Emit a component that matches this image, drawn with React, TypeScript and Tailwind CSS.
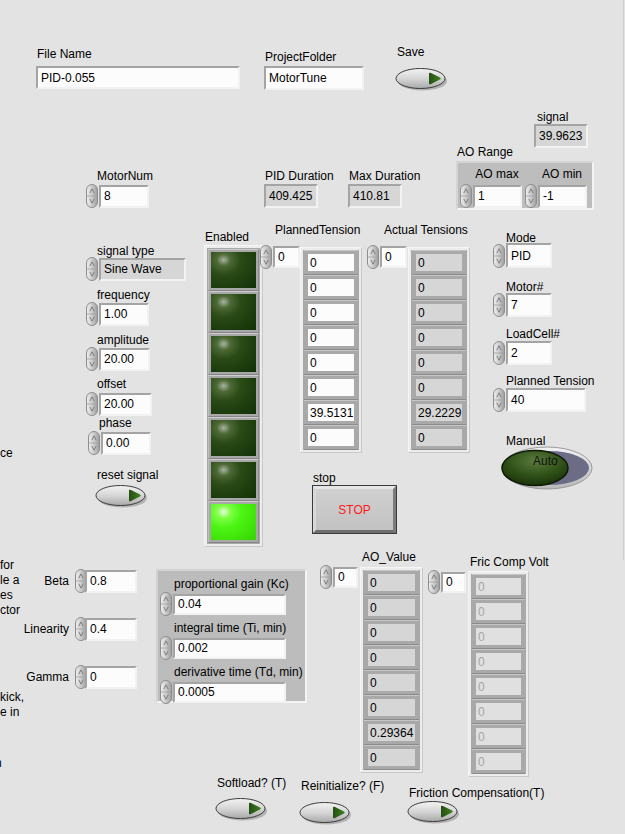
import React from "react";

function Spinner({ className = "" }: { className?: string }) {
  return (
    <svg width="12" height="24" viewBox="0 0 12 24" className={`shrink-0 ${className}`}>
      <defs>
        <linearGradient id="spg" x1="0" x2="1" y1="0" y2="0">
          <stop offset="0" stopColor="#f0f0f0" />
          <stop offset="0.45" stopColor="#cfcfcf" />
          <stop offset="1" stopColor="#9c9c9c" />
        </linearGradient>
      </defs>
      <rect x="0.5" y="0.5" width="11" height="23" rx="5.5" fill="url(#spg)" stroke="#8e8e8e" />
      <line x1="1" y1="12" x2="11" y2="12" stroke="#a0a0a0" strokeWidth="0.8" />
      <path d="M3.8 9.2 L6 4.8 L8.2 9.2" fill="none" stroke="#6a6a6a" strokeWidth="0.8" />
      <path d="M3.8 14.8 L6 19.2 L8.2 14.8" fill="none" stroke="#6a6a6a" strokeWidth="0.8" />
    </svg>
  );
}

function Box({
  className = "",
  tone = "white",
  children,
}: {
  className?: string;
  tone?: "white" | "gray" | "dis";
  children?: React.ReactNode;
}) {
  const bg =
    tone === "white"
      ? "bg-[#fcfcfc] text-black"
      : tone === "gray"
      ? "bg-[#d6d6d6] text-black"
      : "bg-[#e2e2e2] text-[#a8a8a8]";
  return (
    <div
      className={`flex items-center pl-[3px] border-2 border-t-[#a4a4a4] border-l-[#a4a4a4] border-r-[#f2f2f2] border-b-[#f2f2f2] leading-none whitespace-nowrap ${bg} ${className}`}
    >
      {children}
    </div>
  );
}

function OkButton({ className = "" }: { className?: string }) {
  return (
    <svg width="53" height="25" viewBox="0 0 53 25" className={className}>
      <defs>
        <linearGradient id="okg" x1="0" x2="0" y1="0" y2="1">
          <stop offset="0" stopColor="#f4f4f4" />
          <stop offset="0.55" stopColor="#d2d2d2" />
          <stop offset="1" stopColor="#a8a8a8" />
        </linearGradient>
        <linearGradient id="okt" x1="0" x2="1" y1="0" y2="0">
          <stop offset="0" stopColor="#244f12" />
          <stop offset="1" stopColor="#3f7f22" />
        </linearGradient>
      </defs>
      <ellipse cx="27.5" cy="14" rx="24.5" ry="9.5" fill="#8a8a8a" opacity="0.55" />
      <ellipse cx="25.5" cy="11.5" rx="24.5" ry="10" fill="url(#okg)" stroke="#3c3c3c" strokeWidth="1" />
      <path d="M34 6 Q35 5.5 36 6 L45 10.5 Q46.5 11.5 45 12.5 L36 17 Q35 17.5 34 17 Z" fill="url(#okt)" />
    </svg>
  );
}

function Led({ on = false }: { on?: boolean }) {
  return (
    <div className="p-[2px] bg-[#a8a8a8] border-t border-t-[#cdcdcd] border-l border-l-[#bdbdbd] border-b border-b-[#858585] border-r border-r-[#8e8e8e]">
      <div
        className={`w-[45px] h-[36px] ${
          on
            ? "bg-[radial-gradient(ellipse_at_28%_22%,#e8ffd8_0%,#7dff45_16%,#4cf514_40%,#36d400_100%)]"
            : "bg-[radial-gradient(ellipse_at_28%_22%,#a8b4a0_0%,#4d6a36_15%,#2a4a16_38%,#123006_100%)]"
        }`}
      />
    </div>
  );
}

function ArrayCol({
  values,
  tone,
  className = "",
}: {
  values: string[];
  tone: "white" | "gray" | "dis";
  className?: string;
}) {
  const inner =
    tone === "white"
      ? "bg-[#fcfcfc] text-black"
      : tone === "gray"
      ? "bg-[#d6d6d6] text-black"
      : "bg-[#e0e0e0] text-[#a6a6a6]";
  return (
    <div className={`flex flex-col p-[2px] bg-[#ececec] border border-t-[#f6f6f6] border-l-[#f6f6f6] border-b-[#c8c8c8] border-r-[#c8c8c8] ${className}`}>
      <div className="flex flex-col bg-[#a9a9a9] px-[1px]">
        {values.map((v, i) => (
          <div
            key={i}
            className="px-[4px] py-[3px] border-t border-t-[#c6c6c6] border-b border-b-[#8a8a8a]"
          >
            <div className={`h-[17px] flex items-center pl-[2px] leading-none ${inner}`}>{v}</div>
          </div>
        ))}
      </div>
    </div>
  );
}

function Lbl({ className = "", children }: { className?: string; children: React.ReactNode }) {
  return <div className={`absolute leading-[14px] whitespace-nowrap ${className}`}>{children}</div>;
}

export default function App() {
  return (
    <div className="relative w-[625px] h-[834px] overflow-hidden bg-[#e3e3e3] text-[12px] text-black font-['Liberation_Sans',Arial,sans-serif]">
      {/* right edge line */}
      <div className="absolute left-[623px] top-0 w-[1px] h-[560px] bg-[#cfcfcf]" />

      {/* File name */}
      <Lbl className="left-[37px] top-[47px]">File Name</Lbl>
      <Box className="absolute left-[36px] top-[66px] w-[204px] h-[23px]">PID-0.055</Box>

      <Lbl className="left-[265px] top-[50px]">ProjectFolder</Lbl>
      <Box className="absolute left-[264px] top-[66px] w-[100px] h-[24px]">MotorTune</Box>

      <Lbl className="left-[397px] top-[45px]">Save</Lbl>
      <OkButton className="absolute left-[395px] top-[67px]" />

      <Lbl className="left-[537px] top-[110px]">signal</Lbl>
      <Box tone="gray" className="absolute left-[534px] top-[124px] w-[54px] h-[24px]">39.9623</Box>

      {/* AO Range cluster */}
      <Lbl className="left-[457px] top-[145px]">AO Range</Lbl>
      <div className="absolute left-[456px] top-[161px] w-[138px] h-[49px] bg-[#bdbdbd] border-2 border-t-[#d4d4d4] border-l-[#d4d4d4] border-r-[#f4f4f4] border-b-[#f4f4f4] flex gap-[3px] pl-[2px] pt-[2px]">
        <div className="flex flex-col items-center">
          <div className="leading-[14px] ml-[12px] mt-[2px] mb-[3px]">AO max</div>
          <div className="flex items-center gap-[1px]">
            <Spinner />
            <Box className="w-[49px] h-[23px]">1</Box>
          </div>
        </div>
        <div className="flex flex-col items-center">
          <div className="leading-[14px] ml-[12px] mt-[2px] mb-[3px]">AO min</div>
          <div className="flex items-center gap-[1px]">
            <Spinner />
            <Box className="w-[49px] h-[23px]">-1</Box>
          </div>
        </div>
      </div>

      {/* MotorNum */}
      <Lbl className="left-[97px] top-[169px]">MotorNum</Lbl>
      <div className="absolute left-[86px] top-[184px] flex items-center gap-[1px]">
        <Spinner />
        <Box className="w-[50px] h-[23px]">8</Box>
      </div>

      <Lbl className="left-[265px] top-[169px]">PID Duration</Lbl>
      <Box tone="gray" className="absolute left-[264px] top-[184px] w-[54px] h-[24px]">409.425</Box>

      <Lbl className="left-[349px] top-[169px]">Max Duration</Lbl>
      <Box tone="gray" className="absolute left-[348px] top-[184px] w-[54px] h-[24px]">410.81</Box>

      {/* Enabled LEDs */}
      <Lbl className="left-[205px] top-[230px]">Enabled</Lbl>
      <div className="absolute left-[204px] top-[245px] p-[2px] bg-[#ececec] border border-t-[#f6f6f6] border-l-[#f6f6f6] border-b-[#c8c8c8] border-r-[#c8c8c8]">
        <div className="flex flex-col bg-[#a9a9a9] p-[1px]">
          <Led />
          <Led />
          <Led />
          <Led />
          <Led />
          <Led />
          <Led on />
        </div>
      </div>

      {/* Planned Tension array */}
      <Lbl className="left-[275px] top-[223px]">PlannedTension</Lbl>
      <div className="absolute left-[260px] top-[245px] flex items-center gap-[1px]">
        <Spinner />
        <Box className="w-[27px] h-[22px]">0</Box>
      </div>
      <ArrayCol
        className="absolute left-[300px] top-[247px] w-[62px]"
        tone="white"
        values={["0", "0", "0", "0", "0", "0", "39.5131", "0"]}
      />

      <Lbl className="left-[384px] top-[223px]">Actual Tensions</Lbl>
      <div className="absolute left-[367px] top-[245px] flex items-center gap-[1px]">
        <Spinner />
        <Box className="w-[27px] h-[22px]">0</Box>
      </div>
      <ArrayCol
        className="absolute left-[408px] top-[247px] w-[62px]"
        tone="gray"
        values={["0", "0", "0", "0", "0", "0", "29.2229", "0"]}
      />

      {/* stop */}
      <Lbl className="left-[313px] top-[471px]">stop</Lbl>
      <div className="absolute left-[312px] top-[485px] w-[85px] h-[49px] border border-[#3a3a3a] bg-[#7a7a7a] p-0">
        <div className="w-full h-full border-[3px] border-t-[#e6e6e6] border-l-[#d8d8d8] border-r-[#7c7c7c] border-b-[#6e6e6e] bg-[linear-gradient(#d0d0d0,#c2c2c2)] flex items-center justify-center text-[#ff1a1a] text-[12px]">
          STOP
        </div>
      </div>

      {/* Right column */}
      <Lbl className="left-[506px] top-[231px]">Mode</Lbl>
      <div className="absolute left-[493px] top-[243px] flex items-center gap-[1px]">
        <Spinner />
        <Box className="w-[46px] h-[25px]">PID</Box>
      </div>
      <Lbl className="left-[506px] top-[280px]">Motor#</Lbl>
      <div className="absolute left-[493px] top-[293px] flex items-center gap-[1px]">
        <Spinner />
        <Box className="w-[46px] h-[24px]">7</Box>
      </div>
      <Lbl className="left-[506px] top-[327px]">LoadCell#</Lbl>
      <div className="absolute left-[493px] top-[341px] flex items-center gap-[1px]">
        <Spinner />
        <Box className="w-[46px] h-[24px]">2</Box>
      </div>
      <Lbl className="left-[506px] top-[374px]">Planned Tension</Lbl>
      <div className="absolute left-[493px] top-[388px] flex items-center gap-[1px]">
        <Spinner />
        <Box className="w-[80px] h-[24px]">40</Box>
      </div>

      <Lbl className="left-[506px] top-[434px]">Manual</Lbl>
      <div className="absolute left-[499px] top-[445px] w-[94px] h-[46px]">
        <svg width="94" height="46" viewBox="0 0 94 46" className="absolute left-0 top-0">
          <defs>
            <linearGradient id="ring" x1="0" x2="0" y1="0" y2="1">
              <stop offset="0" stopColor="#f2f2f2" />
              <stop offset="1" stopColor="#b8b8b8" />
            </linearGradient>
            <radialGradient id="gsw" cx="0.5" cy="0.3" r="0.7">
              <stop offset="0" stopColor="#5a7a3c" />
              <stop offset="0.6" stopColor="#2f5018" />
              <stop offset="1" stopColor="#1a3309" />
            </radialGradient>
          </defs>
          <ellipse cx="48" cy="23" rx="45" ry="21" fill="url(#ring)" stroke="#9a9a9a" strokeWidth="1" />
          <ellipse cx="50" cy="23" rx="40" ry="17" fill="#6c6c86" />
          <ellipse cx="36" cy="23" rx="33" ry="17.5" fill="url(#gsw)" stroke="#0e1a06" strokeWidth="1.5" />
        </svg>
        <div className="absolute left-[34px] top-[9px] leading-[14px] text-[#111]">Auto</div>
      </div>

      {/* Signal params */}
      <Lbl className="left-[97px] top-[244px]">signal type</Lbl>
      <div className="absolute left-[86px] top-[257px] flex items-center gap-[1px]">
        <Spinner />
        <Box tone="gray" className="w-[87px] h-[23px]">Sine Wave</Box>
      </div>
      <Lbl className="left-[97px] top-[288px]">frequency</Lbl>
      <div className="absolute left-[86px] top-[302px] flex items-center gap-[1px]">
        <Spinner />
        <Box className="w-[50px] h-[23px]">1.00</Box>
      </div>
      <Lbl className="left-[97px] top-[333px]">amplitude</Lbl>
      <div className="absolute left-[86px] top-[347px] flex items-center gap-[1px]">
        <Spinner />
        <Box className="w-[51px] h-[23px]">20.00</Box>
      </div>
      <Lbl className="left-[97px] top-[377px]">offset</Lbl>
      <div className="absolute left-[86px] top-[392px] flex items-center gap-[1px]">
        <Spinner />
        <Box className="w-[53px] h-[23px]">20.00</Box>
      </div>
      <Lbl className="left-[99px] top-[416px]">phase</Lbl>
      <div className="absolute left-[88px] top-[431px] flex items-center gap-[1px]">
        <Spinner />
        <Box className="w-[50px] h-[23px]">0.00</Box>
      </div>
      <Lbl className="left-[97px] top-[468px]">reset signal</Lbl>
      <OkButton className="absolute left-[95px] top-[484px]" />

      {/* cut-off left text */}
      <Lbl className="left-0 top-[446px]">ce</Lbl>
      <div className="absolute left-0 top-[558px] leading-[15px] whitespace-nowrap">
        <div>for</div>
        <div>le a</div>
        <div>es</div>
        <div>ctor</div>
      </div>
      <div className="absolute left-0 top-[690px] leading-[15px] whitespace-nowrap">
        <div>kick,</div>
        <div>e in</div>
      </div>
      <Lbl className="left-[-5px] top-[756px]">n</Lbl>

      {/* Beta / Linearity / Gamma */}
      <div className="absolute left-0 top-[569px] flex flex-col gap-[24px]">
        <div className="flex items-center">
          <div className="w-[70px] text-right pr-[1px] leading-[14px]">Beta</div>
          <Spinner className="ml-[5px]" />
          <Box className="w-[52px] h-[23px] ml-[-2px]">0.8</Box>
        </div>
        <div className="flex items-center">
          <div className="w-[70px] text-right pr-[1px] leading-[14px]">Linearity</div>
          <Spinner className="ml-[5px]" />
          <Box className="w-[52px] h-[23px] ml-[-2px]">0.4</Box>
        </div>
        <div className="flex items-center">
          <div className="w-[70px] text-right pr-[1px] leading-[14px]">Gamma</div>
          <Spinner className="ml-[5px]" />
          <Box className="w-[52px] h-[23px] ml-[-2px]">0</Box>
        </div>
      </div>

      {/* PID gains cluster */}
      <div className="absolute left-[156px] top-[569px] w-[151px] h-[134px] bg-[#bcbcbc] border-2 border-t-[#d2d2d2] border-l-[#d2d2d2] border-r-[#f4f4f4] border-b-[#f4f4f4] pl-[2px] pt-[6px] flex flex-col">
        <div className="leading-[14px] ml-[14px]">proportional gain (Kc)</div>
        <div className="flex items-center gap-[1px] mt-[1px]">
          <Spinner />
          <Box className="w-[113px] h-[21px]">0.04</Box>
        </div>
        <div className="leading-[14px] ml-[14px] mt-[5px]">integral time (Ti, min)</div>
        <div className="flex items-center gap-[1px] mt-[1px]">
          <Spinner />
          <Box className="w-[113px] h-[21px]">0.002</Box>
        </div>
        <div className="leading-[14px] ml-[14px] mt-[5px]">derivative time (Td, min)</div>
        <div className="flex items-center gap-[1px] mt-[1px]">
          <Spinner />
          <Box className="w-[113px] h-[21px]">0.0005</Box>
        </div>
      </div>

      {/* AO_Value */}
      <Lbl className="left-[362px] top-[550px]">AO_Value</Lbl>
      <div className="absolute left-[320px] top-[565px] flex items-center gap-[1px]">
        <Spinner />
        <Box className="w-[25px] h-[21px]">0</Box>
      </div>
      <ArrayCol
        className="absolute left-[360px] top-[567px] w-[63px]"
        tone="gray"
        values={["0", "0", "0", "0", "0", "0", "0.29364", "0"]}
      />

      <Lbl className="left-[470px] top-[555px]">Fric Comp Volt</Lbl>
      <div className="absolute left-[428px] top-[570px] flex items-center gap-[1px]">
        <Spinner />
        <Box className="w-[25px] h-[21px]">0</Box>
      </div>
      <ArrayCol
        className="absolute left-[468px] top-[571px] w-[61px]"
        tone="dis"
        values={["0", "0", "0", "0", "0", "0", "0", "0"]}
      />

      {/* bottom buttons */}
      <Lbl className="left-[217px] top-[776px]">Softload? (T)</Lbl>
      <OkButton className="absolute left-[215px] top-[797px]" />
      <Lbl className="left-[301px] top-[779px]">Reinitialize? (F)</Lbl>
      <OkButton className="absolute left-[299px] top-[801px]" />
      <Lbl className="left-[409px] top-[786px]">Friction Compensation(T)</Lbl>
      <OkButton className="absolute left-[407px] top-[800px]" />
    </div>
  );
}
